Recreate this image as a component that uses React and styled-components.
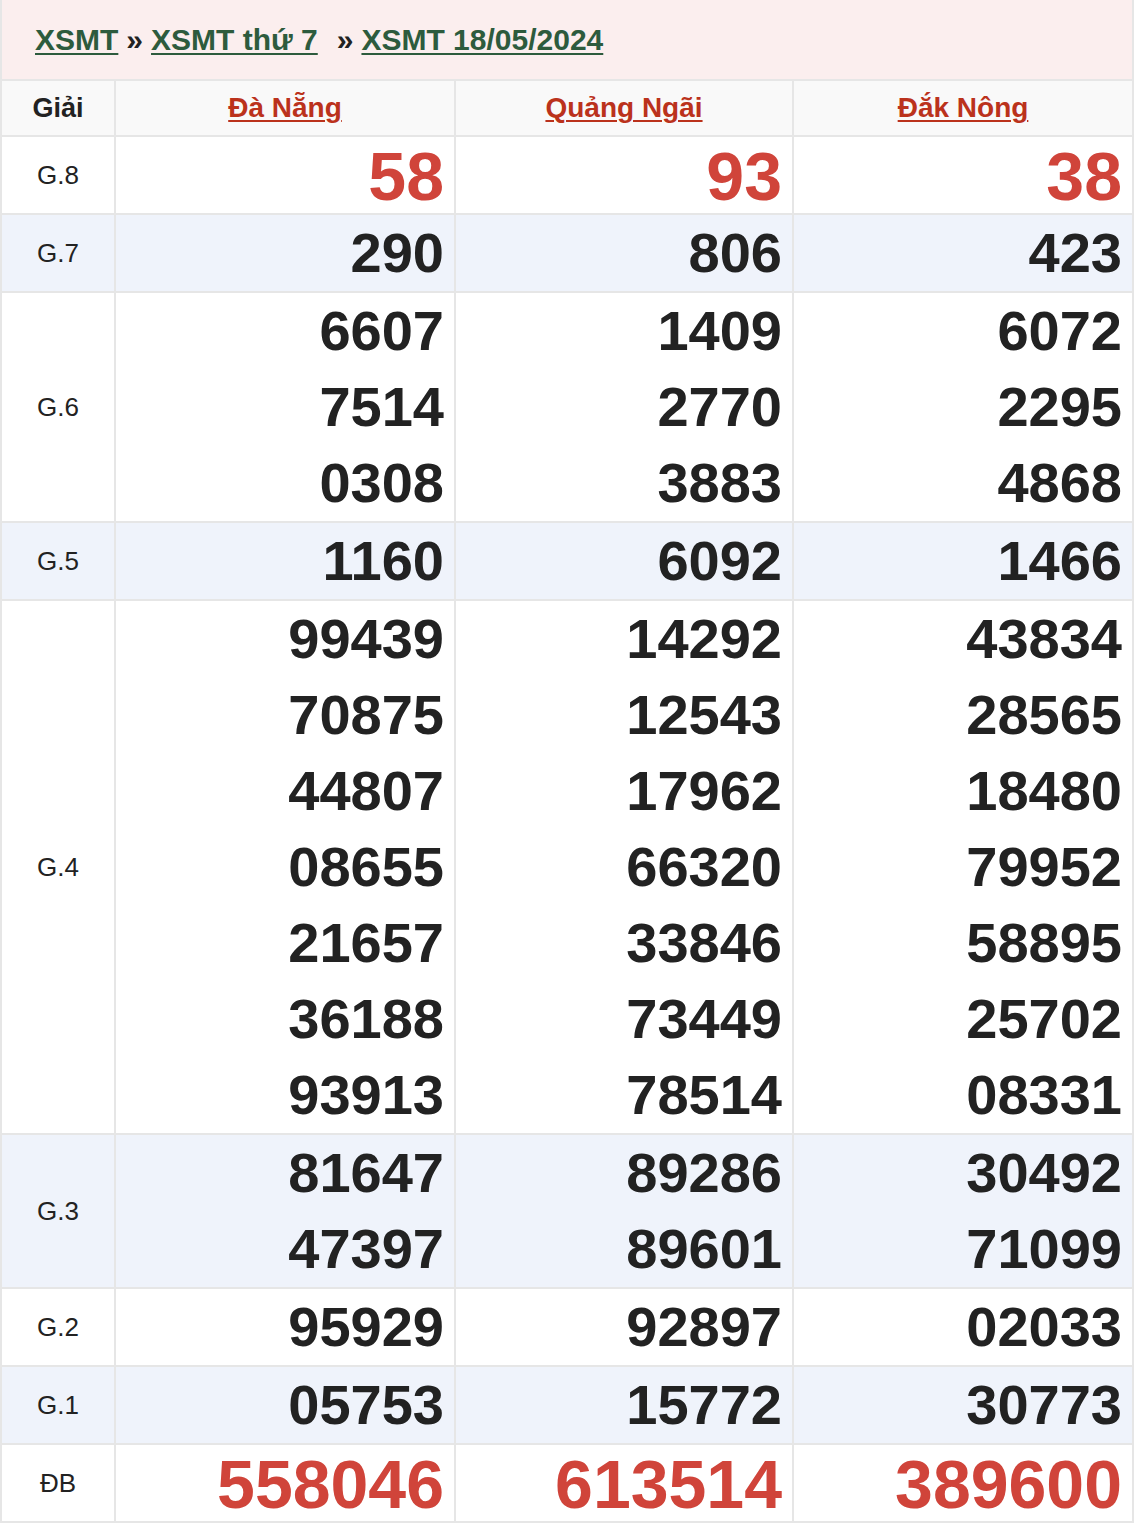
import React from 'react';
import styled, { createGlobalStyle } from 'styled-components';

const GlobalStyle = createGlobalStyle`
    body {
        margin: 0;
        background: #fff;
        font-family: "Liberation Sans", Arial, sans-serif;
    }
`

const provinces = ['Đà Nẵng', 'Quảng Ngãi', 'Đắk Nông'];

const prizes = [
    { label: 'G.8', red: true, cols: [['58'], ['93'], ['38']] },
    { label: 'G.7', cols: [['290'], ['806'], ['423']] },
    { label: 'G.6', cols: [['6607', '7514', '0308'], ['1409', '2770', '3883'], ['6072', '2295', '4868']] },
    { label: 'G.5', cols: [['1160'], ['6092'], ['1466']] },
    {
        label: 'G.4', cols: [
            ['99439', '70875', '44807', '08655', '21657', '36188', '93913'],
            ['14292', '12543', '17962', '66320', '33846', '73449', '78514'],
            ['43834', '28565', '18480', '79952', '58895', '25702', '08331'],
        ]
    },
    { label: 'G.3', cols: [['81647', '47397'], ['89286', '89601'], ['30492', '71099']] },
    { label: 'G.2', cols: [['95929'], ['92897'], ['02033']] },
    { label: 'G.1', cols: [['05753'], ['15772'], ['30773']] },
    { label: 'ĐB', red: true, cols: [['558046'], ['613514'], ['389600']] },
];

const App = () => {
    return (
        <>
            <GlobalStyle />
            <Wrapper>
                <Breadcrumb>
                    <CrumbLink href="#">XSMT</CrumbLink>
                    <Sep>»</Sep>
                    <CrumbLink href="#">XSMT thứ 7</CrumbLink>
                    <Sep wide>»</Sep>
                    <CrumbLink href="#">XSMT 18/05/2024</CrumbLink>
                </Breadcrumb>
                <ResultGrid>
                    <HeadCell>Giải</HeadCell>
                    {provinces.map(p => (
                        <HeadCell key={p}><ProvinceLink href="#">{p}</ProvinceLink></HeadCell>
                    ))}
                    {prizes.map((row, i) => (
                        <React.Fragment key={row.label}>
                            <LabelCell alt={i % 2 === 1}>{row.label}</LabelCell>
                            {row.cols.map((nums, j) => (
                                <NumCell key={j} alt={i % 2 === 1}>
                                    {nums.map(n => <Num key={n} red={row.red}>{n}</Num>)}
                                </NumCell>
                            ))}
                        </React.Fragment>
                    ))}
                </ResultGrid>
            </Wrapper>
        </>
    );
}

const Wrapper = styled.div`
    width: 1130px;
    border-left: 2px solid #e6e6e6;
    border-right: 2px solid #e6e6e6;
`

const Breadcrumb = styled.div`
    display: flex;
    align-items: center;
    height: 79px;
    padding-left: 33px;
    background-color: #fbeeee;
    font-size: 30px;
    font-weight: bold;
`

const CrumbLink = styled.a`
    color: #2d5b3d;
    text-decoration: underline;
    text-decoration-thickness: 2px;
    text-underline-offset: 3px;
`

const Sep = styled.span`
    color: #222;
    font-size: 30px;
    margin: ${props => props.wide ? '0 8px 0 19px' : '0 8px'};
`

const ResultGrid = styled.div`
    display: grid;
    grid-template-columns: 112px 338px 336px 338px;
    gap: 2px;
    background-color: #e6e6e6;
    border-top: 2px solid #e6e6e6;
    border-bottom: 2px solid #e6e6e6;
`

const HeadCell = styled.div`
    display: flex;
    align-items: center;
    justify-content: center;
    height: 54px;
    background-color: #f9f9f9;
    color: #222;
    font-size: 27px;
    font-weight: bold;
`

const ProvinceLink = styled.a`
    color: #bb321c;
    font-size: 28px;
    text-decoration: underline;
    text-decoration-thickness: 2px;
    text-underline-offset: 3px;
`

const LabelCell = styled.div`
    display: flex;
    align-items: center;
    justify-content: center;
    background-color: ${props => props.alt ? '#eff3fb' : '#fff'};
    color: #222;
    font-size: 26px;
`

const NumCell = styled.div`
    display: flex;
    flex-direction: column;
    align-items: flex-end;
    padding-right: 10px;
    background-color: ${props => props.alt ? '#eff3fb' : '#fff'};
`

const Num = styled.div`
    height: 76px;
    line-height: ${props => props.red ? '73px' : '76px'};
    padding-top: ${props => props.red ? '3px' : '0'};
    box-sizing: border-box;
    font-size: ${props => props.red ? '68px' : '56px'};
    font-weight: bold;
    color: ${props => props.red ? '#d0443a' : '#222'};
`

export default App
